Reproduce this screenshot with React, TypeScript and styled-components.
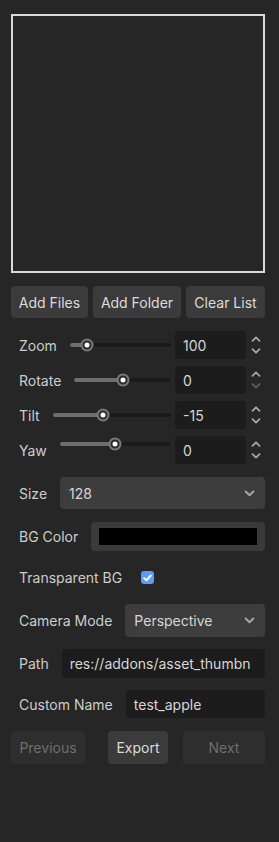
import styled, { createGlobalStyle } from 'styled-components';

const GlobalStyle = createGlobalStyle`
    html, body {
        margin: 0;
        padding: 0;
        background: #262626;
    }
    body {
        font-family: Inter, "Noto Sans", "Liberation Sans", sans-serif;
        font-size: 14px;
        color: #cfcfcf;
    }
`;

const sliders = [
    { label: 'Zoom', value: '100', pos: 16.5, downDim: false, lift: 0 },
    { label: 'Rotate', value: '0', pos: 50, downDim: true, lift: 0 },
    { label: 'Tilt', value: '-15', pos: 42.5, downDim: false, lift: 0 },
    { label: 'Yaw', value: '0', pos: 49.5, downDim: false, lift: 12 },
];

function Chevron({ down, dim }: { down?: boolean; dim?: boolean }) {
    return (
        <svg width="10" height="6" viewBox="0 0 10 6">
            <path
                d={down ? 'M1.5 1.2 L5 4.6 L8.5 1.2' : 'M1.5 4.8 L5 1.4 L8.5 4.8'}
                fill="none"
                stroke={dim ? '#5e5e5e' : '#a6a6a6'}
                strokeWidth="1.8"
                strokeLinecap="round"
                strokeLinejoin="round"
            />
        </svg>
    );
}

export default function App() {
    return (
        <Page>
            <GlobalStyle />
            <Preview />

            <ButtonRow>
                <Button $width={77}>Add Files</Button>
                <Button $width={88}>Add Folder</Button>
                <Button $width={79}>Clear List</Button>
            </ButtonRow>

            <SliderList>
                {sliders.map((s) => (
                    <SliderRow key={s.label}>
                        <Label>{s.label}</Label>
                        <Slider $lift={s.lift}>
                            <Track>
                                <Fill style={{ width: `${s.pos}%` }} />
                            </Track>
                            <Grabber style={{ left: `${s.pos}%` }} />
                        </Slider>
                        <SpinBox>
                            <SpinInput>{s.value}</SpinInput>
                            <Arrows>
                                <Chevron />
                                <Chevron down dim={s.downDim} />
                            </Arrows>
                        </SpinBox>
                    </SliderRow>
                ))}
            </SliderList>

            <Row $height={32} $top={13}>
                <Label>Size</Label>
                <Select>
                    <span>128</span>
                    <Chevron down />
                </Select>
            </Row>

            <Row $height={29} $top={13}>
                <Label>BG Color</Label>
                <ColorPicker>
                    <Swatch />
                </ColorPicker>
            </Row>

            <Row $height={27} $top={13}>
                <Label>Transparent BG</Label>
                <CheckBox>
                    <svg width="9" height="8" viewBox="0 0 9 8">
                        <path
                            d="M1.2 4.2 L3.5 6.3 L7.8 1.5"
                            fill="none"
                            stroke="#ffffff"
                            strokeWidth="1.9"
                            strokeLinecap="round"
                            strokeLinejoin="round"
                        />
                    </svg>
                </CheckBox>
            </Row>

            <Row $height={33} $top={13}>
                <Label>Camera Mode</Label>
                <Select>
                    <span>Perspective</span>
                    <Chevron down />
                </Select>
            </Row>

            <Row $height={29} $top={12}>
                <Label>Path</Label>
                <TextInput>res://addons/asset_thumbn</TextInput>
            </Row>

            <Row $height={28} $top={12}>
                <Label>Custom Name</Label>
                <TextInput>test_apple</TextInput>
            </Row>

            <NavRow>
                <Button $width={74} $off>Previous</Button>
                <Button $width={60} $gap={23}>Export</Button>
                <Button $width={82} $gap={15} $off>Next</Button>
            </NavRow>
        </Page>
    );
}

const Page = styled.div`
    width: 279px;
    min-height: 842px;
    box-sizing: border-box;
    padding: 14px 14px 0 11px;
    display: flex;
    flex-direction: column;
    background: #262626;
`;

const Preview = styled.div`
    height: 259px;
    box-sizing: border-box;
    border: 2px solid #d9d9d9;
`;

const ButtonRow = styled.div`
    display: flex;
    justify-content: space-between;
    margin-top: 13px;
    height: 32px;
`;

const NavRow = styled.div`
    display: flex;
    margin-top: 13px;
    height: 33px;
`;

const Button = styled.div<{ $width: number; $gap?: number; $off?: boolean }>`
    flex: none;
    width: ${({ $width }) => $width}px;
    height: 100%;
    margin-left: ${({ $gap }) => $gap ?? 0}px;
    display: flex;
    align-items: center;
    justify-content: center;
    border-radius: 4px;
    font-size: 14px;
    white-space: nowrap;
    background: ${({ $off }) => ($off ? '#2e2e2e' : '#3b3b3b')};
    color: ${({ $off }) => ($off ? '#6f6f6f' : '#dcdcdc')};
`;

const SliderList = styled.div`
    display: flex;
    flex-direction: column;
    gap: 7px;
    margin-top: 13px;
`;

const SliderRow = styled.div`
    display: flex;
    align-items: center;
    height: 28px;
    padding-left: 8px;
`;

const Label = styled.div`
    flex: none;
    margin-right: 13px;
    white-space: nowrap;
    color: #cdcdcd;
`;

const Slider = styled.div<{ $lift: number }>`
    position: relative;
    flex: 1;
    height: 14px;
    display: flex;
    align-items: center;
    margin-right: 4px;
    margin-bottom: ${({ $lift }) => $lift}px;
`;

const Track = styled.div`
    width: 100%;
    height: 4px;
    border-radius: 2px;
    background: #1a1a1a;
    overflow: hidden;
`;

const Fill = styled.div`
    height: 100%;
    background: #6e6e6e;
`;

const Grabber = styled.div`
    position: absolute;
    top: 50%;
    width: 5px;
    height: 5px;
    border-radius: 50%;
    background: #ffffff;
    border: 2px solid #2b2b2b;
    box-shadow: 0 0 0 2px #7a7a7a;
    transform: translate(-50%, -50%);
`;

const SpinBox = styled.div`
    display: flex;
    align-items: center;
    height: 100%;
`;

const SpinInput = styled.div`
    width: 71px;
    height: 100%;
    box-sizing: border-box;
    padding-left: 8px;
    display: flex;
    align-items: center;
    background: #1c1c1c;
    border-radius: 4px;
    color: #d6d6d6;
`;

const Arrows = styled.div`
    width: 18px;
    display: flex;
    flex-direction: column;
    align-items: center;
    gap: 6px;
    padding-left: 1px;
`;

const Row = styled.div<{ $height: number; $top: number }>`
    display: flex;
    align-items: center;
    height: ${({ $height }) => $height}px;
    margin-top: ${({ $top }) => $top}px;
    padding-left: 8px;
`;

const Select = styled.div`
    flex: 1;
    height: 100%;
    box-sizing: border-box;
    display: flex;
    align-items: center;
    justify-content: space-between;
    padding: 0 10px 0 9px;
    background: #3d3d3d;
    border-radius: 4px;
    color: #d6d6d6;

    svg {
        width: 11px;
        height: 7px;
    }
`;

const ColorPicker = styled.div`
    flex: 1;
    height: 100%;
    box-sizing: border-box;
    padding: 6px 8px;
    background: #3a3a3a;
    border-radius: 4px;
    display: flex;
`;

const Swatch = styled.div`
    flex: 1;
    background: #000000;
`;

const CheckBox = styled.div`
    width: 13px;
    height: 13px;
    margin-left: 6px;
    border-radius: 3px;
    background: #5a9cf8;
    display: flex;
    align-items: center;
    justify-content: center;
`;

const TextInput = styled.div`
    flex: 1;
    min-width: 0;
    height: 100%;
    box-sizing: border-box;
    padding: 0 8px;
    display: flex;
    align-items: center;
    background: #1c1c1c;
    border-radius: 4px;
    color: #d6d6d6;
    white-space: nowrap;
    overflow: hidden;
`;
